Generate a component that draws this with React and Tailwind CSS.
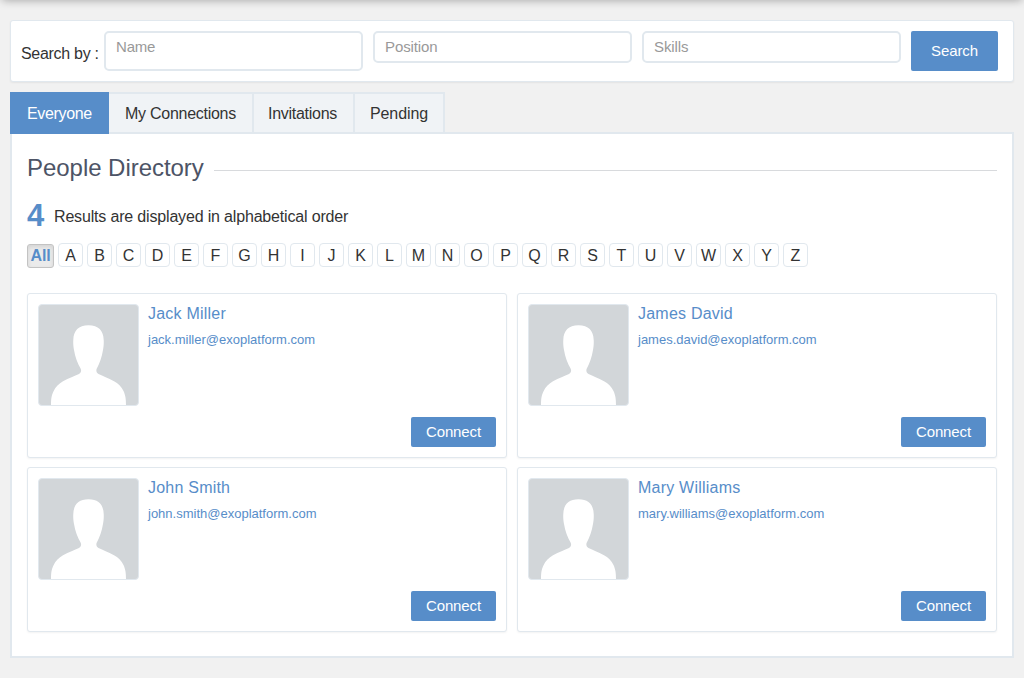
const people = [
  ['Jack Miller', 'jack.miller@exoplatform.com'],
  ['James David', 'james.david@exoplatform.com'],
  ['John Smith', 'john.smith@exoplatform.com'],
  ['Mary Williams', 'mary.williams@exoplatform.com'],
];

const letters = 'ABCDEFGHIJKLMNOPQRSTUVWXYZ'.split('');

function Avatar() {
  return (
    <svg viewBox="0 0 99 100" className="block h-[102px] w-[101px] shrink-0 rounded-[4px] border border-[#e1e8ee] bg-[#d2d6d9]" aria-hidden="true">
      <path
        fill="#fff"
        d="M12 100.500C12 94 12.500 90.500 14.300 86.700C16.500 82 20 78.600 24 76.300C30 72.800 35.500 71.300 40 69C42 67.800 42.600 65.800 41.700 63.800C38.500 58.500 36.200 52 35 45C34.300 41 34.100 38 34.300 35C34.600 25.500 39.500 20.300 49.500 20.300C59.500 20.300 64.400 25.500 64.700 35C64.900 38 64.700 41 64 45C62.800 52 60.700 58.500 57.700 63.800C56.900 65.800 57.500 67.800 59.500 69C64 71.300 69 72.800 75 76.200C79 78.500 82.500 81.500 84.500 86C86.500 90.500 87 94 87 100.500Z"
      />
    </svg>
  );
}

function SearchBar() {
  return (
    <form className="flex h-[62px] items-start rounded-[3px] border border-[#e1e8ee] bg-white pt-[10px] pl-[10px] shadow-[0_1px_2px_rgba(0,0,0,0.06)]">
      <label className="w-[83px] shrink-0 text-base leading-[46px] tracking-[-0.3px]">Search by :</label>
      <div className="flex items-start gap-[10px]">
        <input placeholder="Name" className="h-[40px] w-[259px] rounded-[5px] border-2 border-[#e1e8ee] bg-white px-[10px] pb-[10px] text-[15px] leading-5 tracking-[-0.2px] placeholder:text-[#999] placeholder:opacity-100" />
        <input placeholder="Position" className="h-[32px] w-[259px] rounded-[5px] border-2 border-[#e1e8ee] bg-white px-[10px] pb-[2px] text-[15px] leading-5 tracking-[-0.1px] placeholder:text-[#999] placeholder:opacity-100" />
        <input placeholder="Skills" className="h-[32px] w-[259px] rounded-[5px] border-2 border-[#e1e8ee] bg-white px-[10px] pb-[2px] text-[15px] leading-5 tracking-[-0.1px] placeholder:text-[#999] placeholder:opacity-100" />
        <button type="button" className="h-[40px] w-[87px] rounded-[2px] bg-[#578dc9] text-[15px] tracking-[-0.1px] text-white">Search</button>
      </div>
    </form>
  );
}

function Tabs() {
  return (
    <nav className="-mb-[2px] flex h-[42px] text-base">
      <a className="flex w-[99px] items-center bg-[#578dc9] pt-[2px] pl-[17px] tracking-[-0.35px] text-white">Everyone</a>
      <a className="flex w-[145px] items-center border-y-2 border-r-2 border-[#e1e8ee] bg-[#f0f3f6] pt-[2px] pl-[16px] tracking-[-0.27px]">My Connections</a>
      <a className="flex w-[101px] items-center border-y-2 border-r-2 border-[#e1e8ee] bg-[#f0f3f6] pt-[2px] pl-[14px] tracking-[-0.27px]">Invitations</a>
      <a className="flex w-[90px] items-center border-y-2 border-r-2 border-[#e1e8ee] bg-[#f0f3f6] pt-[2px] pl-[15px] tracking-[-0.1px]">Pending</a>
    </nav>
  );
}

function PersonCard({ name, email }) {
  return (
    <article className="flex h-[165px] rounded-[3px] border border-[#e1e8ee] bg-white p-[10px] shadow-[0_1px_2px_rgba(0,0,0,0.05)]">
      <Avatar />
      <div className="flex flex-1 flex-col pl-[9px]">
        <a className="text-base leading-5 tracking-[0.22px] text-[#578dc9]">{name}</a>
        <a className="mt-[6px] text-[13px] leading-5 text-[#578dc9]">{email}</a>
        <button type="button" className="mt-auto h-[30px] w-[85px] self-end rounded-[2px] bg-[#578dc9] text-[15px] tracking-[-0.1px] text-white">Connect</button>
      </div>
    </article>
  );
}

export default function App() {
  return (
    <main className="flow-root h-[678px] w-[1024px] overflow-hidden bg-[#f1f1f1] font-['Liberation_Sans',Arial,sans-serif] text-[#333]">
      <div className="mx-[2px] -mt-[10px] mb-[20px] h-[10px] shadow-[0_0_10px_rgba(0,0,0,0.35)]" />
      <div className="ml-[10px] w-[1004px]">
        <SearchBar />
        <div className="mt-[10px]">
          <Tabs />
        </div>
        <section className="h-[526px] border-2 border-[#e1e8ee] bg-white px-[15px]">
          <div className="flex items-center gap-[10px] pt-[18px]">
            <h1 className="w-[177px] text-[24px] leading-8 tracking-[-0.04px] whitespace-nowrap text-[#4d5466]">People Directory</h1>
            <div className="mt-[5px] h-px flex-1 bg-[#d8dadd]" />
          </div>
          <div className="mt-[15px] flex h-[32px] items-center">
            <strong className="w-[27px] pt-[2px] text-[31px] leading-8 text-[#578dc9]">4</strong>
            <span className="pt-[3px] text-base tracking-[-0.17px]">Results are displayed in alphabetical order</span>
          </div>
          <div className="mt-[12px] flex gap-[4px]">
            <a className="mt-[1px] flex h-[24px] w-[27px] items-center justify-center rounded-[3px] border border-[#c3c3c3] bg-[#ebebeb] text-base font-bold tracking-[-0.2px] text-[#578dc9] shadow-[inset_0_2px_4px_rgba(0,0,0,0.1)]">All</a>
            {letters.map((letter) => (
              <a key={letter} className="flex h-[24px] w-[25px] items-center justify-center rounded-[4px] border border-[#e1e8ee] pt-[2px] text-base">{letter}</a>
            ))}
          </div>
          <div className="mt-[25px] grid grid-cols-2 gap-x-[10px] gap-y-[9px]">
            {people.map(([name, email]) => (
              <PersonCard key={email} name={name} email={email} />
            ))}
          </div>
        </section>
      </div>
    </main>
  );
}
